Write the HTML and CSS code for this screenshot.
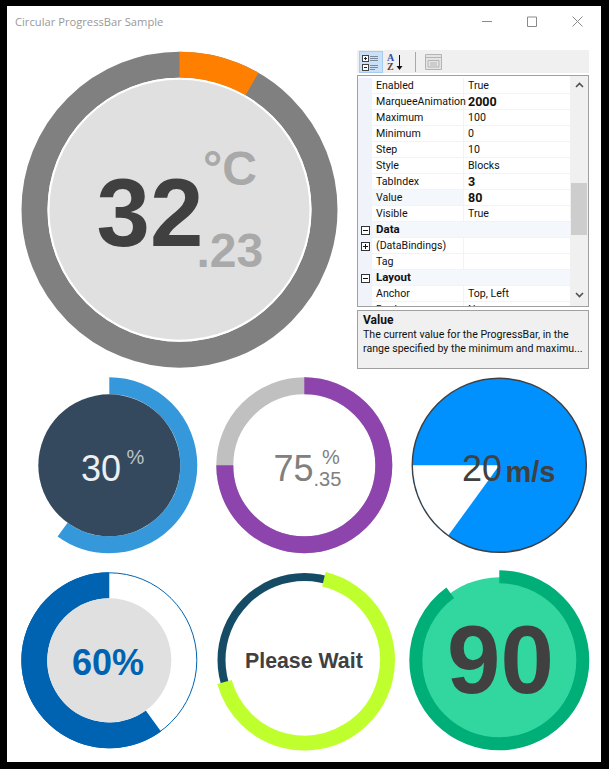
FILE: index.html
```html
<!DOCTYPE html>
<html lang="en">
<head>
    <meta charset="UTF-8">
    <title>Circular ProgressBar Sample</title>
    <link rel="stylesheet" href="styles.css">
</head>
<body>
    <div class="window">
        <header class="titlebar">
            <span class="title">Circular ProgressBar Sample</span>
            <div class="controls">
                <svg class="ctl" width="10" height="11" viewBox="0 0 10 11"><path d="M0 5.5H10"/></svg>
                <svg class="ctl" width="10" height="11" viewBox="0 0 10 11"><path d="M.5 1H9.5V10.5H.5Z"/></svg>
                <svg class="ctl" width="11" height="11" viewBox="0 0 11 11"><path d="M.5 .5L10.5 10.5M10.5 .5L.5 10.5"/></svg>
            </div>
        </header>

        <section class="top">
            <!-- Big temperature gauge -->
            <svg class="gauge-big" width="340" height="330" viewBox="0 0 340 330">
                <circle cx="167.5" cy="171.7" r="145" fill="none" stroke="#808080" stroke-width="26"/>
                <circle cx="167.5" cy="171.7" r="145" fill="none" stroke="#ff8000" stroke-width="26" pathLength="360" stroke-dasharray="30 330" transform="rotate(-90 167.5 171.7)"/>
                <circle cx="167.5" cy="171.7" r="131" fill="#e0e0e0" stroke="#fff" stroke-width="2"/>
                <text class="t-bold t-dark t-96" x="84.5" y="208">32</text>
                <text class="t-bold t-soft t-48" x="191" y="147">°C</text>
                <text class="t-bold t-soft t-48" x="184.5" y="228.5">.23</text>
            </svg>

            <!-- Property grid -->
            <aside class="props">
                <div class="toolbar">
                    <span class="tool tool-active">
                        <svg width="22" height="20" viewBox="0 0 22 20">
                            <rect x="2.5" y="3.5" width="6" height="6" fill="#fff" stroke="#444"/>
                            <rect x="2.5" y="12.5" width="6" height="6" fill="#fff" stroke="#444"/>
                            <path d="M4 6.500H7M5.500 5V8M4 15.500H7" stroke="#222"/>
                            <path d="M10 4.500H18M10 6.500H18M10 8.500H18M10 13.500H18M10 15.500H18M10 17.500H15" stroke="#7a8a9a"/>
                        </svg>
                    </span>
                    <span class="tool">
                        <svg width="18" height="20" viewBox="0 0 18 20">
                            <text class="az az-a" x="1" y="9">A</text>
                            <text class="az az-z" x="1" y="18">Z</text>
                            <path d="M13.500 3V16" stroke="#111"/>
                            <path d="M10.500 14H16.500L13.500 18Z" fill="#111"/>
                        </svg>
                    </span>
                    <span class="tool-sep"></span>
                    <span class="tool">
                        <svg width="17" height="16" viewBox="0 0 17 16">
                            <path d="M.5 .5H16.500V15.500H.5Z" fill="#e4e4e4" stroke="#b4b4b4"/>
                            <path d="M.5 3.500H16.500M3 6.500H14V13H3ZM5 9H12M5 11H12" fill="none" stroke="#b4b4b4"/>
                        </svg>
                    </span>
                </div>

                <div class="grid-box">
                    <div class="rows">
                        <div class="row"><span class="gut"></span><span class="name">Enabled</span><span class="val">True</span></div>
                        <div class="row"><span class="gut"></span><span class="name">MarqueeAnimation</span><span class="val bold">2000</span></div>
                        <div class="row"><span class="gut"></span><span class="name">Maximum</span><span class="val">100</span></div>
                        <div class="row"><span class="gut"></span><span class="name">Minimum</span><span class="val">0</span></div>
                        <div class="row"><span class="gut"></span><span class="name">Step</span><span class="val">10</span></div>
                        <div class="row"><span class="gut"></span><span class="name">Style</span><span class="val">Blocks</span></div>
                        <div class="row"><span class="gut"></span><span class="name">TabIndex</span><span class="val bold">3</span></div>
                        <div class="row row-selected"><span class="gut"></span><span class="name">Value</span><span class="val bold">80</span></div>
                        <div class="row"><span class="gut"></span><span class="name">Visible</span><span class="val">True</span></div>
                        <div class="row row-cat"><span class="gut"><i class="box box-minus"></i></span><span class="cat">Data</span></div>
                        <div class="row"><span class="gut"><i class="box box-plus"></i></span><span class="name">(DataBindings)</span><span class="val"></span></div>
                        <div class="row"><span class="gut"></span><span class="name">Tag</span><span class="val"></span></div>
                        <div class="row row-cat"><span class="gut"><i class="box box-minus"></i></span><span class="cat">Layout</span></div>
                        <div class="row"><span class="gut"></span><span class="name">Anchor</span><span class="val">Top, Left</span></div>
                        <div class="row"><span class="gut"></span><span class="name">Dock</span><span class="val">None</span></div>
                    </div>
                    <div class="scrollbar">
                        <svg width="9" height="6" viewBox="0 0 9 6"><path d="M1 5L4.500 1.500L8 5" fill="none" stroke="#505050" stroke-width="1.600"/></svg>
                        <div class="track"><div class="thumb"></div></div>
                        <svg width="9" height="6" viewBox="0 0 9 6"><path d="M1 1L4.500 4.500L8 1" fill="none" stroke="#505050" stroke-width="1.600"/></svg>
                    </div>
                </div>

                <div class="desc">
                    <div class="desc-title">Value</div>
                    <div>The current value for the ProgressBar, in the</div>
                    <div>range specified by the minimum and maximu...</div>
                </div>
            </aside>
        </section>

        <section class="gauges">
            <svg class="gauge" viewBox="0 0 195 195">
                <circle cx="97.300" cy="97.300" r="79.500" fill="none" stroke="#3498db" stroke-width="17" pathLength="360" stroke-dasharray="216 144" transform="rotate(-90 97.300 97.300)"/>
                <circle cx="97.300" cy="97.300" r="71" fill="#34495e"/>
                <text class="t-36 t-light" x="69" y="113">30</text>
                <text class="t-20 t-pale" x="114.500" y="96">%</text>
            </svg>

            <svg class="gauge" viewBox="0 0 195 195">
                <circle cx="97.300" cy="97.300" r="79.500" fill="none" stroke="#c0c0c0" stroke-width="17"/>
                <circle cx="97.300" cy="97.300" r="79.500" fill="none" stroke="#8e44ad" stroke-width="17" pathLength="360" stroke-dasharray="270 90" transform="rotate(-90 97.300 97.300)"/>
                <text class="t-36 t-mid" x="66.500" y="113">75</text>
                <text class="t-20 t-mid" x="115" y="96">%</text>
                <text class="t-20 t-mid" x="106.500" y="118">.35</text>
            </svg>

            <svg class="gauge" viewBox="0 0 195 195">
                <circle cx="97.300" cy="97.300" r="87" fill="#0091ff" stroke="#404040" stroke-width="1.500"/>
                <path d="M97.300 97.300L11 97.300A86.300 86.300 0 0 0 46.600 167.100Z" fill="#fff"/>
                <text class="t-36 t-dark" x="60" y="113">20</text>
                <text class="t-bold t-29 t-dark" x="103.500" y="113.500">m/s</text>
            </svg>

            <svg class="gauge" viewBox="0 0 195 195">
                <circle cx="97.300" cy="97.300" r="87.500" fill="#fff" stroke="#0063b1"/>
                <circle cx="97.300" cy="97.300" r="75" fill="none" stroke="#0063b1" stroke-width="26" pathLength="360" stroke-dasharray="216 144" transform="rotate(54 97.300 97.300)"/>
                <circle cx="97.300" cy="97.300" r="62" fill="#e0e0e0"/>
                <text class="t-bold t-36 t-blue" x="60" y="112">60%</text>
            </svg>

            <svg class="gauge" viewBox="0 0 195 195">
                <circle cx="97.500" cy="97" r="83" fill="none" stroke="#154b64" stroke-width="8"/>
                <circle cx="97.500" cy="97" r="83" fill="none" stroke="#c0ff2e" stroke-width="15" pathLength="360" stroke-dasharray="241 119" transform="rotate(-76.500 97.500 97)"/>
                <text class="t-bold t-21 t-dark" x="38" y="105">Please Wait</text>
            </svg>

            <svg class="gauge" viewBox="0 0 195 195">
                <circle cx="97.300" cy="97.300" r="83" fill="#32d79f"/>
                <circle cx="97.300" cy="97.300" r="83.500" fill="none" stroke="#00ae78" stroke-width="13" pathLength="360" stroke-dasharray="324 36" transform="rotate(-90 97.300 97.300)"/>
                <text class="t-bold t-96 t-dark" x="45" y="130">90</text>
            </svg>
        </section>
    </div>
</body>
</html>
```

FILE: styles.css
```css
body {
    margin: 0;
    background-color: #000;
    font-family: Roboto, "Liberation Sans", sans-serif;
}

.window {
    width: 594px;
    height: 756px;
    margin: 6px 0 0 7px;
    background-color: #fff;
    overflow: hidden;
}

.titlebar {
    height: 32px;
    display: flex;
    justify-content: space-between;
    padding: 8px 18px 0 8px;
    box-sizing: border-box;
}

.title {
    font-family: "Open Sans", sans-serif;
    font-size: 11.2px;
    line-height: 15px;
    color: #999;
}

.controls {
    display: flex;
    gap: 35px;
    margin-top: 2px;
}

.ctl {
    fill: none;
    stroke: #8a8a8a;
}

.top {
    height: 330px;
    display: flex;
    gap: 5px;
    padding-left: 5px;
}

.gauge-big {
    flex: none;
}

.props {
    width: 232px;
    margin-top: 12px;
    font-size: 10.6px;
    color: #111;
}

.toolbar {
    height: 23px;
    display: flex;
    align-items: center;
    gap: 3px;
    padding-left: 2px;
    background-color: #f0f0f0;
    box-sizing: border-box;
}

.tool {
    display: flex;
}

.tool-active {
    background-color: #c9e0f7;
    border: 1px solid #a3cef2;
}

.tool-sep {
    width: 1px;
    height: 20px;
    margin: 0 6px 0 8px;
    background-color: #a8a8a8;
}

.az {
    font-family: "Liberation Serif", serif;
    font-size: 10px;
    font-weight: bold;
}

.az-a {
    fill: #2a4fa8;
}

.az-z {
    fill: #6a3a30;
}

.grid-box {
    height: 232px;
    margin-top: 2px;
    display: flex;
    border: 1px solid #a0a0a0;
    box-sizing: border-box;
    background-color: #fff;
    overflow: hidden;
}

.rows {
    width: 212px;
    padding-top: 2px;
}

.row {
    height: 16px;
    display: flex;
    line-height: 15px;
    box-sizing: border-box;
    border-bottom: 1px solid #f0f4fa;
}

.gut {
    width: 14px;
    flex: none;
    display: flex;
    align-items: center;
    justify-content: center;
    background-color: #f0f4fa;
    margin-bottom: -1px;
}

.name {
    width: 92px;
    flex: none;
    padding-left: 4px;
    box-sizing: border-box;
    border-right: 1px solid #f0f4fa;
    white-space: nowrap;
}

.val {
    padding-left: 4px;
}

.bold, .cat {
    font-weight: bold;
}

.val.bold {
    font-size: 12.5px;
}

.cat {
    padding-left: 4px;
    font-size: 11.5px;
}

.row-cat {
    background-color: #f4f7fc;
}

.row-selected .name {
    background-color: #f4f7fc;
}

.box {
    width: 9px;
    height: 9px;
    box-sizing: border-box;
    border: 1px solid #333;
    background-color: #fff;
    position: relative;
}

.box::before {
    content: "";
    position: absolute;
    left: 1px;
    top: 3px;
    width: 5px;
    height: 1px;
    background-color: #111;
}

.box-plus::after {
    content: "";
    position: absolute;
    left: 3px;
    top: 1px;
    width: 1px;
    height: 5px;
    background-color: #111;
}

.scrollbar {
    flex: 1;
    display: flex;
    flex-direction: column;
    align-items: center;
    padding-top: 6px;
    background-color: #f0f0f0;
}

.track {
    height: 200px;
    align-self: stretch;
    padding: 93px 1px 0 1px;
    box-sizing: border-box;
    margin: 2px 0;
}

.thumb {
    height: 52px;
    background-color: #cdcdcd;
}

.desc {
    height: 59px;
    margin-top: 3px;
    padding: 2px 5px;
    line-height: 14px;
    border: 1px solid #a0a0a0;
    box-sizing: border-box;
    background-color: #f0f0f0;
    white-space: nowrap;
}

.desc-title {
    font-weight: bold;
    font-size: 12px;
    line-height: 15px;
}

.gauges {
    display: grid;
    grid-template-columns: repeat(3, 195px);
    grid-auto-rows: 195px;
    padding-left: 5px;
}

.gauge {
    width: 195px;
    height: 195px;
}

.gauge-big text, .gauge text {
    font-family: "Liberation Sans", Arial, sans-serif;
}

.t-bold { font-weight: bold; }
.t-96 { font-size: 96px; }
.t-48 { font-size: 48px; }
.t-36 { font-size: 36px; }
.t-29 { font-size: 29px; }
.t-21 { font-size: 21.33px; }
.t-20 { font-size: 20px; }

.t-dark { fill: #404040; }
.t-soft { fill: #a9a9a9; }
.t-light { fill: #ecf0f1; }
.t-pale { fill: #bdc3c7; }
.t-mid { fill: #808080; }
.t-blue { fill: #0063b1; }
```
